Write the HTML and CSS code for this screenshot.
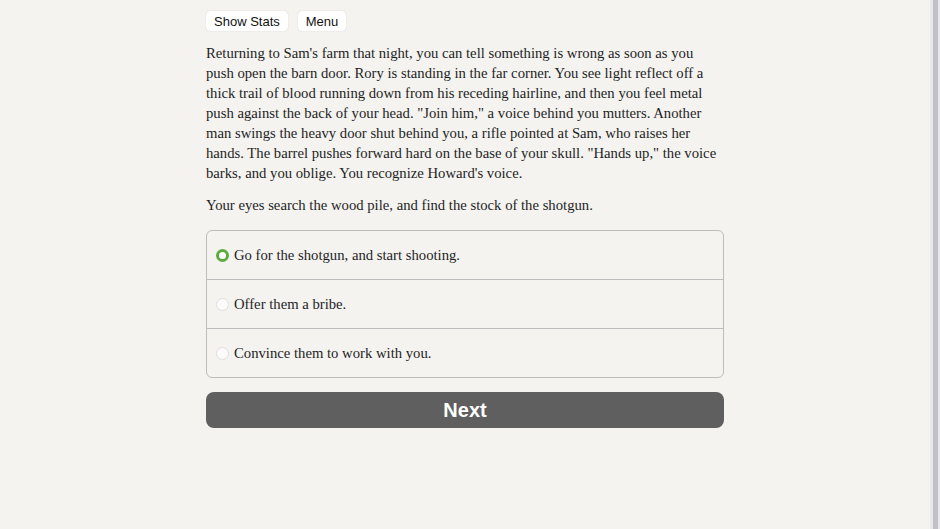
FILE: index.html
```html
<!DOCTYPE html>
<html>
<head>
<meta charset="utf-8">
<link rel="stylesheet" href="styles.css">
</head>
<body>
<div class="page">
  <main class="main">
    <div class="container">
      <div class="buttons">
        <button class="spacedLink">Show Stats</button>
        <button class="spacedLink">Menu</button>
      </div>
      <div class="text">
        <p>Returning to Sam's farm that night, you can tell something is wrong as soon as you push open the barn door. Rory is standing in the far corner. You see light reflect off a thick trail of blood running down from his receding hairline, and then you feel metal push against the back of your head. "Join him," a voice behind you mutters. Another man swings the heavy door shut behind you, a rifle pointed at Sam, who raises her hands. The barrel pushes forward hard on the base of your skull. "Hands up," the voice barks, and you oblige. You recognize Howard's voice.</p>
        <p>Your eyes search the wood pile, and find the stock of the shotgun.</p>
      </div>
      <div class="choice">
        <label class="option first"><span class="radio checked"></span><span>Go for the shotgun, and start shooting.</span></label>
        <label class="option"><span class="radio"></span><span>Offer them a bribe.</span></label>
        <label class="option last"><span class="radio"></span><span>Convince them to work with you.</span></label>
      </div>
      <button class="next">Next</button>
    </div>
  </main>
  <div class="scrollbar"><div class="track"></div></div>
</div>
</body>
</html>
```

FILE: styles.css
```css
html, body {
  margin: 0;
  padding: 0;
  height: 100%;
}
body {
  background: #f4f3f0;
  color: #1e1e1e;
  font-family: "Liberation Serif", "DejaVu Serif", serif;
}
.page {
  display: flex;
  height: 100%;
}
.main {
  flex: 1;
  display: flex;
  justify-content: center;
}
.container {
  width: 518px;
  padding-top: 11px;
}
.buttons {
  display: flex;
  gap: 10px;
}
.spacedLink {
  font-family: "Liberation Sans", Arial, sans-serif;
  font-size: 13px;
  color: #111;
  background: #fff;
  border: none;
  border-radius: 4px;
  height: 20px;
  padding: 0 8px;
  box-shadow: 0 0 1px rgba(0,0,0,0.25);
}
.text {
  margin-top: 12px;
  font-size: 14.7px;
  line-height: 20px;
}
.text p {
  margin: 0 0 12px 0;
}
.choice {
  margin-top: 15px;
  border: 1px solid #bdbdbd;
  border-radius: 6px;
  display: flex;
  flex-direction: column;
}
.option {
  display: flex;
  align-items: center;
  height: 48px;
  padding-left: 9px;
  font-size: 14.7px;
  border-top: 1px solid #bdbdbd;
}
.option.first {
  border-top: none;
}
.radio {
  width: 13px;
  height: 13px;
  border-radius: 50%;
  background: #fbfbfb;
  border: 1px solid #dedede;
  margin-right: 5px;
  box-sizing: border-box;
  flex: none;
}
.radio.checked {
  background: #fff;
  border: 3.5px solid #5eab3e;
}
.next {
  margin-top: 14px;
  width: 100%;
  height: 36px;
  background: #5f5f5f;
  color: #fff;
  border: none;
  border-radius: 8px;
  font-family: "Liberation Sans", Arial, sans-serif;
  font-weight: bold;
  font-size: 20px;
}
.scrollbar {
  width: 10px;
  display: flex;
  background: #e8e8ec;
}
.track {
  margin-left: 3px;
  width: 5px;
  background: #c2c2c6;
}
```
